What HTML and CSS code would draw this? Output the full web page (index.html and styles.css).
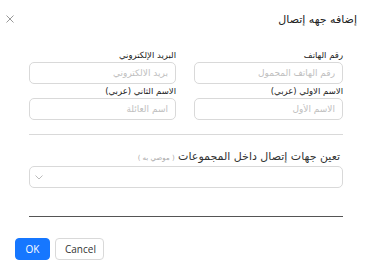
FILE: index.html
```html
<!DOCTYPE html>
<html lang="ar" dir="rtl">
<head>
  <meta charset="utf-8">
  <title>إضافه جهه إتصال</title>
  <link rel="stylesheet" href="styles.css">
</head>
<body>
  <div class="modal">
    <div class="modal-header">
      <h2 class="modal-title">إضافه جهه إتصال</h2>
      <span class="close">
        <svg width="8" height="8" viewBox="0 0 8 8"><path d="M0.5 0.5 L7.5 7.5 M7.5 0.5 L0.5 7.5" stroke="#999" stroke-width="1" fill="none"/></svg>
      </span>
    </div>

    <form class="contact-form">
      <div class="fields">
        <div class="field">
          <label>رقم الهاتف</label>
          <input type="text" placeholder="رقم الهاتف المحمول">
        </div>
        <div class="field">
          <label>البريد الإلكتروني</label>
          <input type="text" placeholder="بريد الالكتروني">
        </div>
        <div class="field">
          <label>الاسم الاولي (عربي)</label>
          <input type="text" placeholder="الاسم الأول">
        </div>
        <div class="field">
          <label>الاسم الثاني (عربي)</label>
          <input type="text" placeholder="اسم العائلة">
        </div>
      </div>

      <hr class="divider">

      <div class="group-title">تعين جهات إتصال داخل المجموعات <small>( موصي به )</small></div>
      <div class="select">
        <svg width="8" height="5" viewBox="0 0 8 5"><path d="M0.5 0.5 L4 4 L7.5 0.5" stroke="#bbb" stroke-width="1" fill="none"/></svg>
      </div>

      <hr class="divider dark">
    </form>

    <div class="modal-footer">
      <button type="button" class="btn primary">OK</button>
      <button type="button" class="btn">Cancel</button>
    </div>
  </div>
</body>
</html>
```

FILE: styles.css
```css
body { margin: 0; background: #fff; font-family: "DejaVu Sans", sans-serif; color: #333; }
.modal { width: 372px; height: 269px; }

.modal-header {
  display: flex;
  justify-content: space-between;
  align-items: center;
  height: 38px;
  padding: 0 15px 0 6px;
}
.modal-title { margin: 0; font-size: 11px; font-weight: normal; color: #222; }
.close { display: flex; direction: ltr; }

.contact-form { padding: 11px 29px 0 29px; }
.fields {
  display: grid;
  grid-template-columns: 149px 147px;
  column-gap: 18px;
  row-gap: 1px;
}
.field label {
  display: block;
  font-size: 8.5px;
  line-height: 12px;
  color: #222;
}
.field input {
  box-sizing: border-box;
  width: 100%;
  height: 22px;
  border: 1px solid #d9d9d9;
  border-radius: 5px;
  padding: 0 7px;
  font-family: inherit;
  font-size: 9px;
  direction: rtl;
}
.field input::placeholder { color: #c0c0c0; }

.divider { border: none; border-top: 1px solid #d9d9d9; margin: 14px 0 0 0; }
.divider.dark { border-top-color: #555; margin-top: 28px; }

.group-title { margin-top: 14px; font-size: 11px; line-height: 16px; color: #333; padding-right: 3px; }
.group-title small { font-size: 7px; color: #aaa; }

.select {
  box-sizing: border-box;
  height: 22px;
  border: 1px solid #d9d9d9;
  border-radius: 5px;
  display: flex;
  align-items: center;
  justify-content: flex-end;
  padding: 0 5px;
}

.modal-footer {
  display: flex;
  direction: ltr;
  gap: 5px;
  padding: 21px 15px 0 15px;
}
.btn {
  height: 22px;
  padding: 0 9px;
  border: 1px solid #d9d9d9;
  border-radius: 4px;
  background: #fff;
  font-family: "Open Sans", sans-serif;
  font-size: 10px;
  color: #333;
}
.btn.primary { background: #1677ff; border-color: #1677ff; color: #fff; width: 35px; }
.btn:not(.primary) { width: 49px; }
```
